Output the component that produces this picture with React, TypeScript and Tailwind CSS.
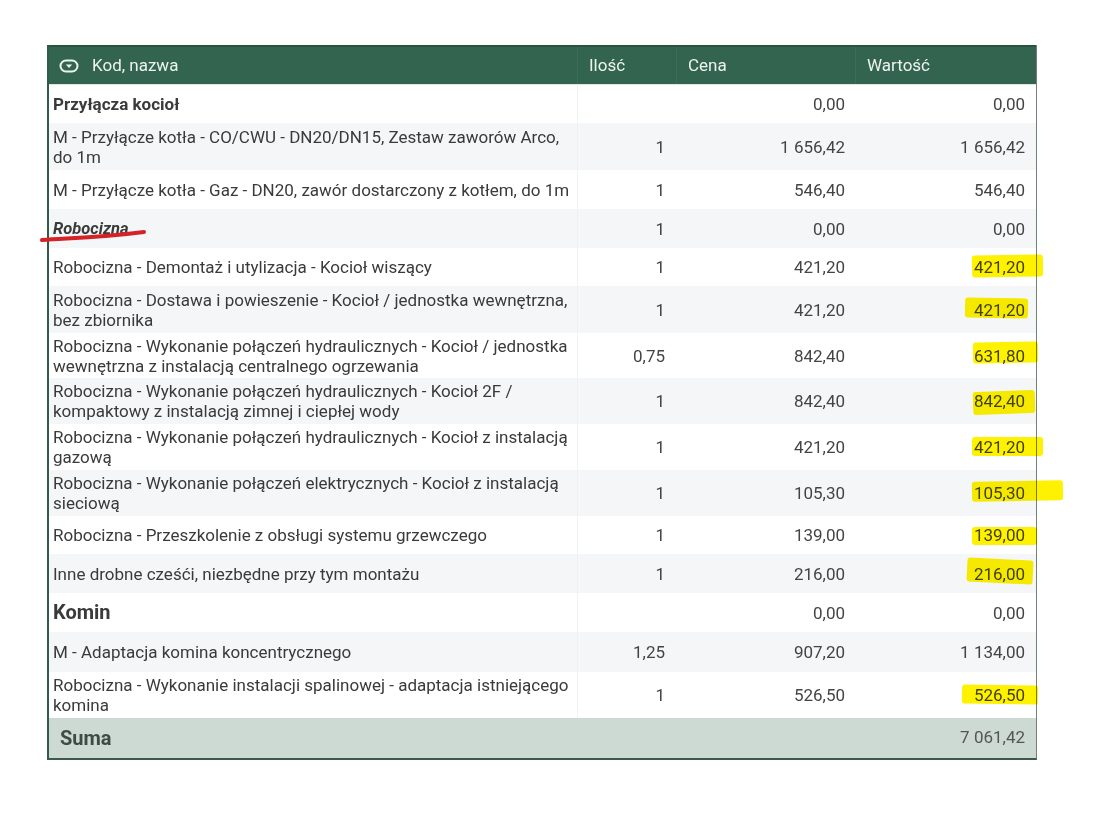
import type { ReactNode } from 'react'

type Row = {
  name: ReactNode
  qty?: string
  price: string
  value: string
  h: string
  alt: boolean
}

const ROWS: Row[] = [
  { name: <span className="font-bold">Przyłącza kocioł</span>, price: '0,00', value: '0,00', h: 'h-[38px]', alt: false },
  {
    name: 'M - Przyłącze kotła - CO/CWU - DN20/DN15, Zestaw zaworów Arco, do 1m',
    qty: '1',
    price: '1 656,42',
    value: '1 656,42',
    h: 'h-[47px]',
    alt: true,
  },
  {
    name: 'M - Przyłącze kotła - Gaz - DN20, zawór dostarczony z kotłem, do 1m',
    qty: '1',
    price: '546,40',
    value: '546,40',
    h: 'h-[39px]',
    alt: false,
  },
  {
    name: <span className="text-[16.5px] font-bold italic">Robocizna</span>,
    qty: '1',
    price: '0,00',
    value: '0,00',
    h: 'h-[39px]',
    alt: true,
  },
  { name: 'Robocizna - Demontaż i utylizacja - Kocioł wiszący', qty: '1', price: '421,20', value: '421,20', h: 'h-[38px]', alt: false },
  {
    name: 'Robocizna - Dostawa i powieszenie - Kocioł / jednostka wewnętrzna, bez zbiornika',
    qty: '1',
    price: '421,20',
    value: '421,20',
    h: 'h-[47px]',
    alt: true,
  },
  {
    name: 'Robocizna - Wykonanie połączeń hydraulicznych - Kocioł / jednostka wewnętrzna z instalacją centralnego ogrzewania',
    qty: '0,75',
    price: '842,40',
    value: '631,80',
    h: 'h-[45px]',
    alt: false,
  },
  {
    name: 'Robocizna - Wykonanie połączeń hydraulicznych - Kocioł 2F / kompaktowy z instalacją zimnej i ciepłej wody',
    qty: '1',
    price: '842,40',
    value: '842,40',
    h: 'h-[46px]',
    alt: true,
  },
  {
    name: 'Robocizna - Wykonanie połączeń hydraulicznych - Kocioł z instalacją gazową',
    qty: '1',
    price: '421,20',
    value: '421,20',
    h: 'h-[46px]',
    alt: false,
  },
  {
    name: 'Robocizna - Wykonanie połączeń elektrycznych - Kocioł z instalacją sieciową',
    qty: '1',
    price: '105,30',
    value: '105,30',
    h: 'h-[46px]',
    alt: true,
  },
  { name: 'Robocizna - Przeszkolenie z obsługi systemu grzewczego', qty: '1', price: '139,00', value: '139,00', h: 'h-[38px]', alt: false },
  { name: 'Inne drobne cześći, niezbędne przy tym montażu', qty: '1', price: '216,00', value: '216,00', h: 'h-[39px]', alt: true },
  { name: <span className="text-[20px] font-bold">Komin</span>, price: '0,00', value: '0,00', h: 'h-[39px]', alt: false },
  { name: 'M - Adaptacja komina koncentrycznego', qty: '1,25', price: '907,20', value: '1 134,00', h: 'h-[40px]', alt: true },
  {
    name: 'Robocizna - Wykonanie instalacji spalinowej - adaptacja istniejącego komina',
    qty: '1',
    price: '526,50',
    value: '526,50',
    h: 'h-[46px]',
    alt: false,
  },
]

// yellow marker strokes drawn over the Wartość column
const MARKS = [
  'left-[972px] top-[255px] w-[71px] h-[22px] -rotate-1',
  'left-[965px] top-[298px] w-[63px] h-[20px] rotate-1',
  'left-[973px] top-[342px] w-[65px] h-[21px] -rotate-1',
  'left-[973px] top-[391px] w-[62px] h-[23px] -rotate-2',
  'left-[972px] top-[437px] w-[71px] h-[19px]',
  'left-[972px] top-[481px] w-[91px] h-[20px] -rotate-1',
  'left-[972px] top-[527px] w-[65px] h-[18px]',
  'left-[967px] top-[559px] w-[66px] h-[24px] rotate-3',
  'left-[962px] top-[685px] w-[76px] h-[19px] rotate-1',
]

function ExpandIcon() {
  return (
    <svg width="20" height="14" viewBox="0 0 20 14" fill="none" aria-hidden>
      <rect x="1.5" y="1.5" width="17" height="11" rx="5.5" stroke="#eef3ef" strokeWidth="2" />
      <path d="M6.8 5.6 H13.2 L10 9 Z" fill="#eef3ef" />
    </svg>
  )
}

export default function App() {
  return (
    <div className="relative h-[817px] w-full bg-white font-['Roboto',sans-serif] text-[#3a3a3a]">
      <div className="ml-[47px] pt-[45px]">
        <div className="w-[990px] border-b-2 border-l-2 border-r border-b-[#3b5a4c] border-l-[#2f5b47] border-r-[#6f8379]">
          {/* header */}
          <div className="grid h-[40px] grid-cols-[529px_99px_179px_180px] border-t-2 border-b border-t-[#2b5241] border-b-[#dfe8e3] bg-[#33644f] text-[17px] text-[#eef3ef]">
            <div className="flex items-center gap-[13px] pl-[10px] border-r border-[#3d6d58]">
              <ExpandIcon />
              <span>Kod, nazwa</span>
            </div>
            <div className="flex items-center pl-[11px] border-r border-[#3d6d58]">Ilość</div>
            <div className="flex items-center pl-[11px] border-r border-[#3d6d58]">Cena</div>
            <div className="flex items-center pl-[11px]">Wartość</div>
          </div>

          {ROWS.map((r, i) => (
            <div
              key={i}
              className={`grid grid-cols-[529px_99px_179px_180px] text-[17px] leading-[20px] ${r.h} ${
                r.alt ? 'bg-[#f5f6f8]' : 'bg-white'
              }`}
            >
              <div className="flex items-center border-r border-[#f0f1f3] pl-[4px] pr-[3px]">
                <span>{r.name}</span>
              </div>
              <div className="flex items-center justify-end pr-[12px] text-[#444]">{r.qty}</div>
              <div className="flex items-center justify-end pr-[11px] text-[#444]">{r.price}</div>
              <div className="flex items-center justify-end pr-[11px] text-[#444]">{r.value}</div>
            </div>
          ))}

          {/* total */}
          <div className="flex h-[40px] items-center justify-between bg-[#cdd9d3] pl-[11px] pr-[11px]">
            <span className="text-[20px] font-bold text-[#3d4c45]">Suma</span>
            <span className="text-[17px] text-[#555]">7 061,42</span>
          </div>
        </div>
      </div>

      {/* hand-drawn annotations */}
      <svg className="absolute left-[36px] top-[224px]" width="120" height="24" viewBox="0 0 120 24" aria-hidden>
        <path d="M6 16 C 30 14, 60 14, 108 8" stroke="#d42226" strokeWidth="4" strokeLinecap="round" fill="none" />
      </svg>
      {MARKS.map((m, i) => (
        <div key={i} className={`absolute rounded-[3px] bg-[#fff200] mix-blend-multiply ${m}`} />
      ))}
    </div>
  )
}
